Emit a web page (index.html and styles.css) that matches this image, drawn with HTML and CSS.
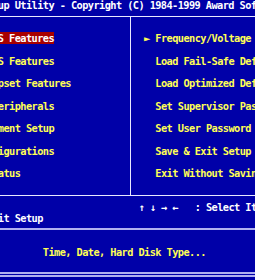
FILE: index.html
```html
<!DOCTYPE html>
<html lang="en">
  <head>
    <meta charset="UTF-8" />
    <meta name="viewport" content="width=device-width, initial-scale=1.0" />
    <title>CMOS Setup Utility</title>
    <link rel="stylesheet" href="styles.css">
  </head>
  <body>
    <div class="screen">
      <div class="title">CMOS Setup Utility - Copyright (C) 1984-1999 Award Software</div>

      <div class="menu">
        <ul class="column left">
          <li><span class="active">Standard CMOS Features</span></li>
          <li>Advanced BIOS Features</li>
          <li>Advanced Chipset Features</li>
          <li>Integrated Peripherals</li>
          <li>Power Management Setup</li>
          <li>PnP/PCI Configurations</li>
          <li>PC Health Status</li>
        </ul>
        <ul class="column right">
          <li><span class="arrow">&#9658;</span>Frequency/Voltage Control</li>
          <li><span class="arrow"></span>Load Fail-Safe Defaults</li>
          <li><span class="arrow"></span>Load Optimized Defaults</li>
          <li><span class="arrow"></span>Set Supervisor Password</li>
          <li><span class="arrow"></span>Set User Password</li>
          <li><span class="arrow"></span>Save &amp; Exit Setup</li>
          <li><span class="arrow"></span>Exit Without Saving</li>
        </ul>
      </div>

      <div class="keys">
        <span>Esc : Quit</span>
        <span>&#8593; &#8595; &#8594; &#8592;   : Select Item</span>
        <span>F10 : Save &amp; Exit Setup</span>
        <span></span>
      </div>

      <div class="help">Time, Date, Hard Disk Type...</div>
    </div>
  </body>
</html>
```

FILE: styles.css
```css
body {
  margin: 0;
  background: #0000a8;
  overflow: hidden;
}
/* 80 columns of 5.625px, rows of 11.25px (text sits 1px low in each row) */
.screen {
  width: 450px;
  margin: -1.375px 0 0 -92.2px;
  font-family: "DejaVu Sans Mono", monospace;
  font-size: 10.3px;
  font-weight: bold;
  letter-spacing: -0.576px;
  line-height: 13.25px;
  color: #ffff55;
}
.title,
.column li,
.keys span,
.help {
  white-space: pre;
}
.title {
  height: 11.25px;
  padding-left: 45px;
  color: #ffffff;
}
.menu {
  display: flex;
  margin-top: 6.125px;
  border-top: 1px solid #e8e8ff;
  border-bottom: 1px solid #e8e8ff;
}
.column {
  list-style: none;
  margin: 0;
  padding: 4.125px 0 16.375px;
}
.column li {
  margin-top: 11.25px;
  height: 11.25px;
}
.left {
  box-sizing: border-box;
  width: 223.2px;
  padding-left: 22.5px;
  border-right: 1px solid #e8e8ff;
}
.right {
  padding-left: 13.05px;
}
.arrow {
  display: inline-block;
  width: 11.25px;
}
.active {
  background: #a80000;
  color: #ffffff;
}
.keys {
  display: grid;
  grid-template-columns: 225px 225px;
  grid-auto-rows: 11.25px;
  margin-top: 5.125px;
  color: #ffffff;
}
.keys span {
  height: 11.25px;
  padding-left: 5.625px;
}
.help {
  height: 11.25px;
  margin-top: 4.375px;
  padding: 16.125px 0 14.625px 135px;
  border-top: 2px solid #b0b0f0;
  border-bottom: 5px double #b0b0f0;
}
```
